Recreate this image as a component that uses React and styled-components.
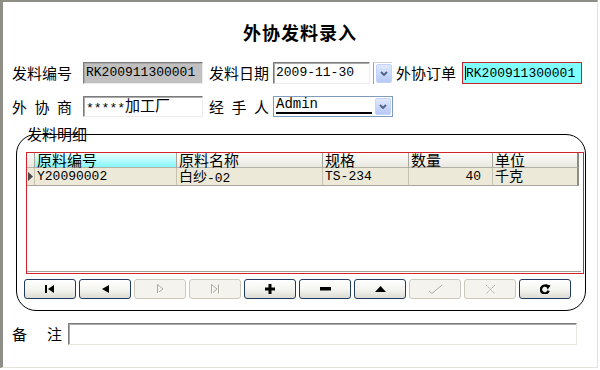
import React from "react";
import styled, { createGlobalStyle } from "styled-components";

const CJK = `"Noto Sans CJK SC", "Liberation Sans", sans-serif`;
const MONO = `"Liberation Mono", "Noto Sans CJK SC", monospace`;

const GlobalStyle = createGlobalStyle`
  html, body {
    margin: 0;
    padding: 0;
    background: #fff;
  }
  body {
    font-family: ${CJK};
  }
`;

const columns = [
  { key: "code", title: "原料编号", width: 142 },
  { key: "name", title: "原料名称", width: 146 },
  { key: "spec", title: "规格", width: 86 },
  { key: "qty", title: "数量", width: 84, align: "right" },
  { key: "unit", title: "单位", width: 86 },
];

const rows = [{ code: "Y20090002", name: "白纱-02", spec: "TS-234", qty: "40", unit: "千克" }];

// split mixed text so Han characters get the larger size like the old bitmap font
const mixed = (text, size) =>
  text.split(/([\u4e00-\u9fa5]+)/).map((part, i) =>
    /[\u4e00-\u9fa5]/.test(part) ? (
      <Han key={i} $size={size}>
        {part}
      </Han>
    ) : (
      part
    )
  );

const Chevron = () => (
  <svg width="8" height="5" viewBox="0 0 8 5">
    <polyline points="1,1 4,4 7,1" fill="none" stroke="#4d6185" strokeWidth="1.8" />
  </svg>
);

const navButtons = [
  {
    id: "first",
    icon: (
      <svg width="10" height="8" viewBox="0 0 10 8">
        <rect x="0" y="0" width="2" height="8" fill="#000" />
        <path d="M3 4 L9 0 V8 Z" fill="#000" />
      </svg>
    ),
  },
  {
    id: "prior",
    icon: (
      <svg width="7" height="8" viewBox="0 0 7 8">
        <path d="M0 4 L7 0 V8 Z" fill="#000" />
      </svg>
    ),
  },
  {
    id: "next",
    disabled: true,
    icon: (
      <svg width="9" height="10" viewBox="0 0 9 10">
        <path d="M2 1.5 L7 5 L2 8.5" fill="none" stroke="#fff" strokeWidth="1" transform="translate(1 1)" />
        <path d="M1.5 0.5 V9 M1.5 0.5 L7 5 L3 8" fill="none" stroke="#aaa99e" strokeWidth="1" />
      </svg>
    ),
  },
  {
    id: "last",
    disabled: true,
    icon: (
      <svg width="11" height="10" viewBox="0 0 11 10">
        <path d="M1.5 0.5 V9.5 M1.5 0.5 L7 5 L3 8.5 M8.5 0.5 V9.5" fill="none" stroke="#fff" strokeWidth="1" transform="translate(1 1)" />
        <path d="M1.5 0.5 V9.5 M1.5 0.5 L7 5 L3 8.5 M8.5 0.5 V9.5" fill="none" stroke="#aaa99e" strokeWidth="1" />
      </svg>
    ),
  },
  {
    id: "insert",
    icon: (
      <svg width="10" height="10" viewBox="0 0 10 10">
        <rect x="3.5" y="0" width="3" height="10" fill="#000" />
        <rect x="0" y="3.5" width="10" height="3" fill="#000" />
      </svg>
    ),
  },
  {
    id: "delete",
    icon: (
      <svg width="11" height="4" viewBox="0 0 11 4">
        <rect x="0" y="0" width="11" height="3.5" fill="#000" />
      </svg>
    ),
  },
  {
    id: "edit",
    icon: (
      <svg width="11" height="6" viewBox="0 0 11 6">
        <path d="M0 6 L5.5 0 L11 6 Z" fill="#000" />
      </svg>
    ),
  },
  {
    id: "post",
    disabled: true,
    icon: (
      <svg width="15" height="11" viewBox="0 0 15 11">
        <path d="M1 7 L4 9.5 L14 1" fill="none" stroke="#fff" strokeWidth="1" transform="translate(1 1)" />
        <path d="M1 7 L4 9.5 L14 1" fill="none" stroke="#aaa99e" strokeWidth="1" />
      </svg>
    ),
  },
  {
    id: "cancel",
    disabled: true,
    icon: (
      <svg width="11" height="11" viewBox="0 0 11 11">
        <path d="M1 1 L10 10 M10 1 L1 10" fill="none" stroke="#fff" strokeWidth="1" transform="translate(1 1)" />
        <path d="M1 1 L10 10 M10 1 L1 10" fill="none" stroke="#aaa99e" strokeWidth="1" strokeDasharray="2 1" />
      </svg>
    ),
  },
  {
    id: "refresh",
    icon: (
      <svg width="11" height="10" viewBox="0 0 11 10">
        <path d="M8.6 6.6 A3.9 3.9 0 1 1 7.2 2.4" fill="none" stroke="#000" strokeWidth="2.4" />
        <path d="M5.2 0 L10.6 1.6 L7.6 5.6 Z" fill="#000" />
      </svg>
    ),
  },
];

const App = () => {
  return (
    <>
      <GlobalStyle />
      <Window>
        <Title>外协发料录入</Title>

        <Row $mt={19}>
          <Label $w={60} $mr={11}>发料编号</Label>
          <TextBox $w={120} $bg="#c0c0c0">RK200911300001</TextBox>
          <Label $w={60} $ml={6} $mr={4}>发料日期</Label>
          <TextBox $w={97}>2009-11-30</TextBox>
          <ComboSide>
            <DropBtn>
              <Chevron />
            </DropBtn>
          </ComboSide>
          <Label $w={60} $ml={4} $mr={6}>外协订单</Label>
          <FocusBox>
            <Caret />
            RK200911300001
          </FocusBox>
        </Row>

        <Row $mt={12} $h={21}>
          <Label $w={60} $mr={11}>外 协 商</Label>
          <TextBox $w={120}>{mixed("*****加工厂", 15)}</TextBox>
          <Label $w={60} $ml={6} $mr={4}>经 手 人</Label>
          <Select>
            <SelectText>
              <span>Admin</span>
            </SelectText>
            <DropBtn>
              <Chevron />
            </DropBtn>
          </Select>
        </Row>

        <Group>
          <Legend>发料明细</Legend>
          <Grid>
            <GridInner>
              <GridRow>
                <HeadCell />
                {columns.map((c, i) => (
                  <HeadCell key={c.key} $selected={i === 0} $last={i === columns.length - 1}>
                    {c.title}
                  </HeadCell>
                ))}
              </GridRow>
              {rows.map((r, ri) => (
                <GridRow key={ri}>
                  <Indicator>
                    <svg width="5" height="9" viewBox="0 0 5 9">
                      <path d="M0 0 L5 4.5 L0 9 Z" fill="#4a4a4a" />
                    </svg>
                  </Indicator>
                  {columns.map((c, i) => (
                    <DataCell key={c.key} $align={c.align} $last={i === columns.length - 1}>
                      {mixed(r[c.key], 14)}
                    </DataCell>
                  ))}
                </GridRow>
              ))}
            </GridInner>
          </Grid>
          <Navigator>
            {navButtons.map((b) => (
              <NavButton key={b.id} $disabled={b.disabled}>
                {b.icon}
              </NavButton>
            ))}
          </Navigator>
        </Group>

        <Row $mt={12}>
          <Label $w={50} $mr={6}>备 注</Label>
          <MemoBox />
        </Row>
      </Window>
    </>
  );
};

const Window = styled.div`
  box-sizing: border-box;
  width: 598px;
  height: 368px;
  border-left: 3px solid #8e8e86;
  border-top: 2px solid #8e8e86;
  border-right: 1px solid #e3e3db;
  border-bottom: 1px solid #e3e3db;
  background: #fff;
  font-family: ${CJK};
  color: #000;
  overflow: hidden;
`;

const Title = styled.h1`
  margin: 0;
  padding-top: 19px;
  height: 22px;
  line-height: 22px;
  text-align: center;
  font-size: 18px;
  font-weight: 700;
  letter-spacing: 1px;
`;

const Row = styled.div`
  display: flex;
  align-items: stretch;
  height: ${(p) => p.$h || 22}px;
  margin-top: ${(p) => p.$mt}px;
  padding-left: 9px;
`;

const Label = styled.span`
  flex: none;
  width: ${(p) => p.$w}px;
  margin-left: ${(p) => p.$ml || 0}px;
  margin-right: ${(p) => p.$mr || 0}px;
  font-size: 15px;
  line-height: 22px;
  white-space: nowrap;
  text-align: justify;
  text-align-last: justify;
`;

const Han = styled.span`
  font-family: ${CJK};
  font-size: ${(p) => p.$size}px;
  line-height: 1;
  vertical-align: 1px;
`;

const TextBox = styled.div`
  box-sizing: border-box;
  flex: none;
  width: ${(p) => p.$w}px;
  padding-left: 2px;
  border: 1px solid;
  border-color: #7c7c7c #ececec #ececec #7c7c7c;
  box-shadow: inset 1px 1px 0 #a9a9a9;
  background: ${(p) => p.$bg || "#fff"};
  font-family: ${MONO};
  font-size: 13px;
  line-height: 19px;
  white-space: nowrap;
`;

const FocusBox = styled.div`
  box-sizing: border-box;
  flex: none;
  width: 120px;
  display: flex;
  align-items: center;
  padding-left: 2px;
  border: 1px solid #c4242b;
  background: #80ffff;
  font-family: ${MONO};
  font-size: 13px;
  white-space: nowrap;
`;

const Caret = styled.span`
  width: 1px;
  height: 14px;
  background: #000;
`;

const ComboSide = styled.div`
  box-sizing: border-box;
  flex: none;
  width: 19px;
  margin-left: 3px;
  display: flex;
  padding: 1px 0 1px 2px;
  border-left: 1px solid #a0a0a0;
  border-top: 1px solid #d0d0d0;
`;

const DropBtn = styled.div`
  box-sizing: border-box;
  flex: none;
  width: 16px;
  display: flex;
  align-items: center;
  justify-content: center;
  border: 1px solid #c4d4fc;
  border-radius: 2px;
  background: linear-gradient(#dfe8fd, #b6caf6);
`;

const Select = styled.div`
  box-sizing: border-box;
  flex: none;
  width: 120px;
  display: flex;
  padding: 1px;
  border: 1px solid #7f9db9;
  background: #fff;
`;

const SelectText = styled.div`
  flex: 1;
  display: flex;
  align-items: flex-end;
  padding: 0 0 1px 1px;
  margin-right: 3px;
  font-family: ${MONO};
  font-size: 14px;

  span {
    flex: 1;
    line-height: 15px;
    border-bottom: 2px solid #000;
  }
`;

const Group = styled.div`
  position: relative;
  box-sizing: border-box;
  width: 570px;
  height: 177px;
  margin: 17px 0 0 13px;
  padding: 17px 1px 0 9px;
  border: 1px solid #000;
  border-radius: 20px;
`;

const Legend = styled.span`
  position: absolute;
  left: 10px;
  top: -10px;
  font-size: 15px;
  line-height: 18px;
`;

const Grid = styled.div`
  box-sizing: border-box;
  width: 558px;
  height: 122px;
  padding: 0 2px 1px 0;
  border: 1px solid #d2232a;
  background: #fff;
`;

const GridInner = styled.div`
  box-sizing: border-box;
  height: 119px;
  border-bottom: 1px solid #a3a29a;
`;

const GridRow = styled.div`
  display: grid;
  grid-template-columns: 8px ${columns.map((c) => c.width + "px").join(" ")};
`;

const HeadCell = styled.div`
  box-sizing: border-box;
  height: 15px;
  padding-left: 2px;
  font-size: 15px;
  line-height: 14px;
  white-space: nowrap;
  border-right: ${(p) => (p.$last ? "2px solid #8d8c84" : "1px solid #a7a69c")};
  border-bottom: 1px solid #b5b3a8;
  background: ${(p) =>
    p.$selected ? "linear-gradient(#eaffff, #86f6ff)" : "linear-gradient(#fdfdfb, #e9e8e0)"};
`;

const Indicator = styled.div`
  box-sizing: border-box;
  height: 18px;
  display: flex;
  align-items: center;
  padding-left: 1px;
  background: #ece9d8;
  border-right: 1px solid #c5c2b2;
  border-bottom: 1px solid #a7a69c;
`;

const DataCell = styled.div`
  box-sizing: border-box;
  height: 18px;
  padding: 0 ${(p) => (p.$align === "right" ? 11 : 0)}px 0 2px;
  text-align: ${(p) => p.$align || "left"};
  font-family: ${MONO};
  font-size: 13px;
  line-height: 17px;
  white-space: nowrap;
  background: #ece9d8;
  border-right: ${(p) => (p.$last ? "2px solid #8d8c84" : "1px solid #c5c2b2")};
  border-bottom: 1px solid #a7a69c;
`;

const Navigator = styled.div`
  display: flex;
  gap: 3px;
  margin: 5px 0 0 -2px;
`;

const NavButton = styled.div`
  box-sizing: border-box;
  width: 52px;
  height: 20px;
  display: flex;
  align-items: center;
  justify-content: center;
  border-radius: 3px;
  border: 1px solid ${(p) => (p.$disabled ? "#cbc9bc" : "#1f3b5f")};
  background: ${(p) =>
    p.$disabled ? "#f4f3ee" : "linear-gradient(#ffffff, #f4f4ef 55%, #dcdcd3)"};
`;

const MemoBox = styled.div`
  box-sizing: border-box;
  flex: none;
  width: 509px;
  border: 1px solid;
  border-color: #7c7c7c #e6e6de #e6e6de #7c7c7c;
  box-shadow: inset 1px 1px 0 #a9a9a9;
  background: #fff;
`;

export default App;
